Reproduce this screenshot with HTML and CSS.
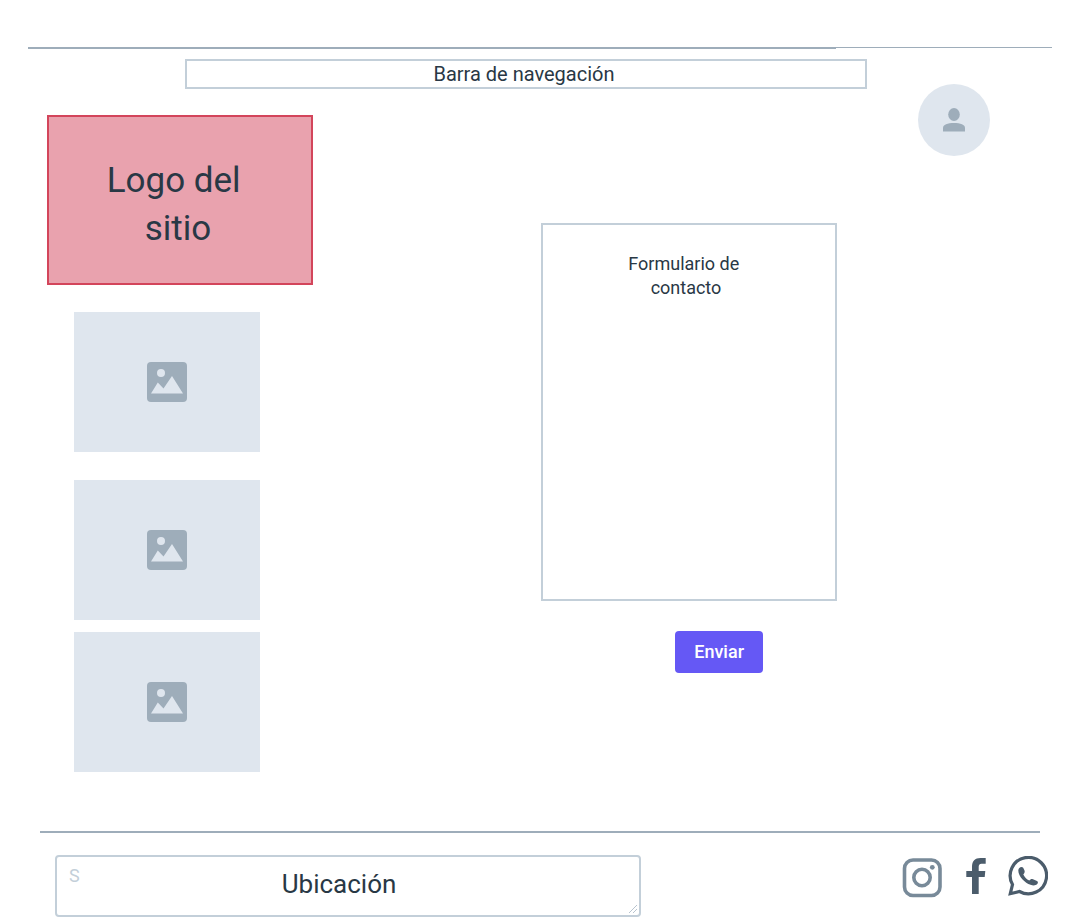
FILE: index.html
```html
<!DOCTYPE html>
<html lang="es">
<head>
<meta charset="utf-8">
<meta name="viewport" content="width=device-width, initial-scale=1">
<title>Contacto</title>
<link rel="stylesheet" href="styles.css">
</head>
<body>
<svg class="symbols" aria-hidden="true">
  <symbol id="picture" viewBox="0 0 40 40">
    <path fill="#9eadba" d="M4 0H36Q40 0 40 4V36Q40 40 36 40H4Q0 40 0 36V4Q0 0 4 0Z"/>
    <circle cx="14" cy="11" r="4" fill="#dfe6ee"/>
    <path fill="#dfe6ee" d="M4 31.5 10.8 20.5 16.5 26.5 25 14 36 31.5Z"/>
  </symbol>
</svg>
<div class="top-rule"><span class="top-rule-thick"></span><span class="top-rule-thin"></span></div>
<div class="layout">
  <div class="primary">
    <nav class="nav">Barra de navegación</nav>
    <main class="content">
      <div class="side">
        <h1 class="logo">Logo del&nbsp;<br>sitio</h1>
        <div class="pictures">
          <div class="picture"><svg class="picture-icon" aria-hidden="true"><use href="#picture"/></svg></div>
          <div class="picture picture-spaced"><svg class="picture-icon" aria-hidden="true"><use href="#picture"/></svg></div>
          <div class="picture"><svg class="picture-icon" aria-hidden="true"><use href="#picture"/></svg></div>
        </div>
      </div>
      <form class="contact">
        <h2 class="contact-box">Formulario de&nbsp;<br>contacto</h2>
        <button class="send" type="button">Enviar</button>
      </form>
    </main>
  </div>
  <a class="avatar" href="#" aria-label="Perfil">
    <svg width="22" height="24" viewBox="0 0 22 24" fill="#9eadba" aria-hidden="true">
      <ellipse cx="11" cy="6.5" rx="5.8" ry="6.5"/>
      <path d="M0 23.5V20C0 16.500 4.500 15 11 15S22 16.500 22 20V23.500Z"/>
    </svg>
  </a>
</div>
<footer class="footer">
  <div class="location">
    <textarea class="location-input" id="location" placeholder="S"></textarea>
    <label class="location-label" for="location">Ubicación</label>
    <svg class="grip" width="10" height="10" viewBox="0 0 10 10" fill="none" stroke="#b8c4cf" aria-hidden="true"><path d="M1 9 9 1M5 9 9 5"/></svg>
  </div>
  <div class="social">
    <a class="social-link" href="#" aria-label="Instagram">
      <svg width="42" height="42" viewBox="0 -1.500 42 42" fill="none" stroke="#788a99" stroke-width="3.600" aria-hidden="true">
        <rect x="2.500" y="2.500" width="35.500" height="35.500" rx="8.500"/>
        <circle cx="20" cy="20" r="8.200"/>
        <circle cx="30.300" cy="9.800" r="2.400" fill="#788a99" stroke="none"/>
      </svg>
    </a>
    <a class="social-link" href="#" aria-label="Facebook">
      <svg width="20" height="40" viewBox="0 0 20 40" aria-hidden="true">
        <path fill="#4b5c6b" d="M6 38V21H.3V15H6V11C6 5 9 2 14.500 2H19.700V7.700H15.500C13.300 7.700 12.700 9 12.700 11V15H19.300L18.700 21H12.700V38Z"/>
      </svg>
    </a>
    <a class="social-link" href="#" aria-label="WhatsApp">
      <svg width="40" height="40" viewBox="0 0 40 40" aria-hidden="true">
        <path fill="none" stroke="#4b5c6b" stroke-width="3.200" d="M2.300 37.700 4.500 28.500A18.200 18.200 0 1 1 11.500 35.500Z"/>
        <path fill="#4b5c6b" d="M10.300 14.500C10.300 12.500 12 11 13.500 11C15 11 15.500 12 16.500 14.500C17 16 16.500 17 15.300 18.400C16.500 21 18.500 23 21.300 24.500C22.500 23 23.500 22.500 25 23.200L29 25C30.500 26 30 27 29 28.300C27.500 29.700 25 29.700 22.500 28.800C17 27 10.300 20.500 10.300 14.500Z"/>
      </svg>
    </a>
  </div>
</footer>
</body>
</html>
```
FILE: styles.css
```css
* { box-sizing: border-box; }

body {
  margin: 0;
  background: #fff;
  color: #293845;
  font-family: Roboto, "Liberation Sans", sans-serif;
}

.symbols { position: absolute; width: 0; height: 0; }

.top-rule {
  display: flex;
  align-items: flex-start;
  margin: 47px 28px 0;
}
.top-rule-thick { flex: 808; height: 2px; background: #9eadba; }
.top-rule-thin { flex: 216; height: 1px; background: #9eadba; }

.layout {
  display: flex;
  align-items: flex-start;
  gap: 51px;
  padding-right: 90px;
}

.primary { flex: 1; padding-top: 10px; }

.nav {
  margin-left: 185px;
  border: 2px solid #c3cfd9;
  padding-right: 4px;
  font-size: 20px;
  line-height: 26px;
  text-align: center;
}

.content {
  display: flex;
  justify-content: space-between;
  align-items: flex-start;
  padding: 26px 30px 0 47px;
}

.side { width: 266px; }

.logo {
  margin: 0;
  border: 2px solid #d3455b;
  padding: 40px 4px 30px 0;
  background: #e9a2ae;
  font-size: 35px;
  font-weight: 400;
  line-height: 48px;
  text-align: center;
}

.pictures { padding: 27px 53px 0 27px; }

.picture {
  display: flex;
  align-items: center;
  justify-content: center;
  height: 140px;
  background: #dfe6ee;
}
.picture-spaced { margin: 28px 0 12px; }
.picture-icon { width: 40px; height: 40px; }

.contact {
  display: flex;
  flex-direction: column;
  width: 296px;
  padding-top: 108px;
}

.contact-box {
  margin: 0;
  border: 2px solid #c3cfd9;
  padding: 27px 6px 0 0;
  min-height: 378px;
  font-size: 18px;
  font-weight: 400;
  line-height: 24px;
  text-align: center;
}

.send {
  align-self: flex-end;
  margin: 30px 74px 0 0;
  border: 0;
  border-radius: 4px;
  padding: 9px 19px;
  background: #6558f5;
  color: #fff;
  font: 500 18px/24px Roboto, "Liberation Sans", sans-serif;
}

.avatar {
  display: flex;
  align-items: center;
  justify-content: center;
  width: 72px;
  height: 72px;
  margin-top: 35px;
  border-radius: 50%;
  background: #dfe6ee;
}

.footer {
  display: flex;
  align-items: flex-start;
  justify-content: space-between;
  gap: 24px;
  margin: 59px 40px 0;
  border-top: 2px solid #9eadba;
  padding: 22px 0 7px 15px;
}

.location { position: relative; flex: 0 1 586px; }

.location-input {
  display: block;
  width: 100%;
  height: 62px;
  border: 2px solid #c3cfd9;
  border-radius: 4px;
  padding: 7px 12px;
  background: #fff;
  color: #293845;
  font: 400 18px/24px Roboto, "Liberation Sans", sans-serif;
  resize: none;
}
.location-input::placeholder { color: #c3cfd9; }

.location-label {
  position: absolute;
  top: 13px;
  left: 50%;
  transform: translateX(-50%);
  padding-right: 18px;
  font-size: 26px;
  line-height: 32px;
}

.grip { position: absolute; right: 3px; bottom: 3px; }

.social { display: flex; gap: 22px; margin: 1px -8px 0 0; }
.social-link { display: block; }
.social-link svg { display: block; }
```
